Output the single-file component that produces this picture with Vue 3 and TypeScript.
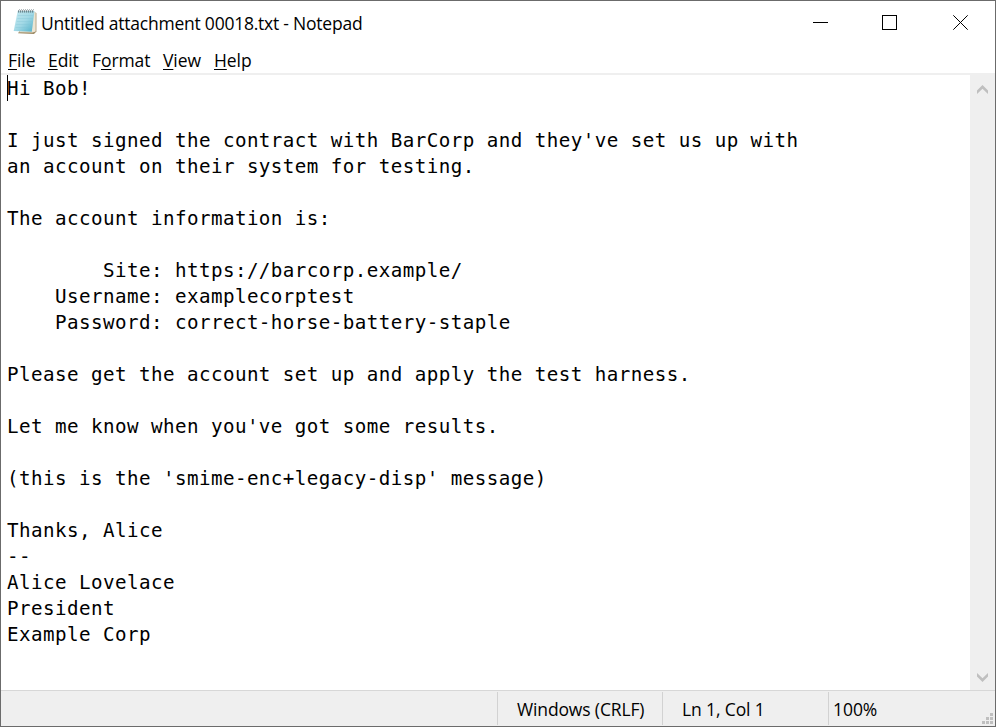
<script setup lang="ts">
interface MenuItem {
  id: string
  key: string
  before: string
  after: string
}

const title = 'Untitled attachment 00018.txt - Notepad'

const menu: MenuItem[] = [
  { id: 'file', before: '', key: 'F', after: 'ile' },
  { id: 'edit', before: '', key: 'E', after: 'dit' },
  { id: 'format', before: 'F', key: 'o', after: 'rmat' },
  { id: 'view', before: '', key: 'V', after: 'iew' },
  { id: 'help', before: '', key: 'H', after: 'elp' },
]

const body: string = [
  'Hi Bob!',
  '',
  "I just signed the contract with BarCorp and they've set us up with",
  'an account on their system for testing.',
  '',
  'The account information is:',
  '',
  '        Site: https://barcorp.example/',
  '    Username: examplecorptest',
  '    Password: correct-horse-battery-staple',
  '',
  'Please get the account set up and apply the test harness.',
  '',
  "Let me know when you've got some results.",
  '',
  "(this is the 'smime-enc+legacy-disp' message)",
  '',
  'Thanks, Alice',
  '--',
  'Alice Lovelace',
  'President',
  'Example Corp',
].join('\n')

const rings = [0, 1, 2, 3, 4, 5, 6, 7]
</script>

<template>
  <div class="window">
    <header class="titlebar">
      <svg class="app-icon" width="24" height="26" viewBox="0 0 24 26">
        <defs>
          <linearGradient id="page" x1="0" y1="0" x2="1" y2="1">
            <stop offset="0" stop-color="#c6e9f1" />
            <stop offset="0.5" stop-color="#a3d9e6" />
            <stop offset="1" stop-color="#4fb0c9" />
          </linearGradient>
        </defs>
        <path d="M5 24.2 L21 25 L23.4 22.5 V4 L21 3 Z" fill="#9c8963" />
        <path d="M20 2.5 L22.7 3.5 V22.5 L19.5 23.5 L6 23.3 Z" fill="#ece5d3" />
        <path d="M4.7 2 H21.5 L18.8 22.8 L0.7 22 Z" fill="url(#page)" />
        <path d="M4.8 6.5H20M4.3 9.5H19.6M3.8 12.5H19.2M3.2 15.5H18.8M2.6 18.5H18.4" stroke="#7fc3d5" stroke-width="0.5" opacity="0.6" />
        <path v-for="n in rings" :key="n" :d="`M${5.7 + n * 2} 3.6 V1.4 l0.9 -0.8`" fill="none" stroke="#52666d" stroke-width="0.9" />
      </svg>
      <span class="title">{{ title }}</span>
      <svg class="controls" width="157" height="17" viewBox="0 0 157 17" fill="none" stroke="#000" stroke-width="1">
        <path d="M0 8.5H15" />
        <rect x="69.5" y="1.5" width="14" height="14" />
        <path d="M140.3 1.3L154.7 15.7M154.7 1.3L140.3 15.7" />
      </svg>
    </header>

    <nav class="menubar">
      <span v-for="m in menu" :key="m.id" :class="['menu-item', m.id]">{{ m.before }}<span class="key">{{ m.key }}</span>{{ m.after }}</span>
    </nav>

    <main class="editor">
      <div class="page">
        <pre class="text">{{ body }}</pre>
        <i class="caret"></i>
      </div>
      <div class="scrollbar">
        <svg width="11" height="9" viewBox="0 0 11 9"><path d="M0 5.5L5.5 0L11 5.5V9L5.5 3.8L0 9Z" fill="#bfbfbf" /></svg>
        <svg width="11" height="9" viewBox="0 0 11 9"><path d="M0 3.5L5.5 9L11 3.5V0L5.5 5.2L0 0Z" fill="#bfbfbf" /></svg>
      </div>
    </main>

    <footer class="status">
      <span class="cell eol"><span>Windows (CRLF)</span></span>
      <span class="cell pos"><span>Ln 1, Col 1</span></span>
      <span class="cell zoom"><span>100%</span></span>
      <svg class="grip" width="11" height="11" viewBox="0 0 11 11" fill="#bfbfbf">
        <path d="M8 0h3v3h-3zM4 4h3v3h-3zM8 4h3v3h-3zM0 8h3v3h-3zM4 8h3v3h-3zM8 8h3v3h-3z" />
      </svg>
    </footer>
  </div>
</template>

<style>
body {
  margin: 0;
  overflow: hidden;
}
</style>

<style scoped>
.window {
  box-sizing: border-box;
  width: 996px;
  height: 727px;
  border: 1px solid #6b6b6b;
  background: #fff;
  color: #000;
  display: flex;
  flex-direction: column;
  font: 17.5px/24px "Open Sans", "Noto Sans", sans-serif;
  white-space: nowrap;
}
.titlebar {
  height: 46px;
  display: flex;
  align-items: flex-start;
}
.app-icon {
  margin: 8px 0 0 12px;
}
.title {
  margin: 10px 0 0 4px;
  letter-spacing: -0.23px;
}
.controls {
  margin: 13px 25px 0 auto;
}
.menubar {
  height: 26px;
  display: flex;
  padding-left: 7px;
  border-bottom: 2px solid #efefef;
}
.menu-item {
  margin-top: 1px;
  letter-spacing: -0.08px;
}
.file { width: 40px; }
.edit { width: 44px; }
.format { width: 71px; }
.view { width: 51px; }
.key {
  text-decoration: underline;
  text-decoration-thickness: 1px;
  text-underline-offset: 2px;
  text-decoration-skip-ink: none;
}
.editor {
  flex: 1;
  min-height: 0;
  display: flex;
}
.page {
  position: relative;
  flex: 1;
}
.text {
  margin: 0;
  padding: 1px 0 0 6px;
  font: 19.2px/26px "DejaVu Sans Mono", monospace;
  letter-spacing: 0.442px;
}
.caret {
  position: absolute;
  left: 6px;
  top: 0;
  width: 1px;
  height: 26px;
  background: #000;
}
.scrollbar {
  box-sizing: border-box;
  width: 25px;
  padding: 10px 0 8px;
  background: #efefef;
  display: flex;
  flex-direction: column;
  align-items: center;
  justify-content: space-between;
}
.status {
  box-sizing: border-box;
  height: 36px;
  padding-top: 1px;
  border-top: 1px solid #d7d7d7;
  background: #efefef;
  display: flex;
}
.cell {
  box-sizing: border-box;
  height: 33px;
  border-left: 1px solid #d2d2d2;
  padding-top: 5px;
}
.eol {
  margin-left: 496px;
  width: 165px;
  padding-left: 19px;
  letter-spacing: -0.14px;
}
.pos {
  width: 166px;
  padding-left: 19px;
  letter-spacing: -0.12px;
}
.zoom {
  padding-left: 4px;
  letter-spacing: -0.05px;
}
.grip {
  margin: 21px 2px 0 auto;
}
</style>
